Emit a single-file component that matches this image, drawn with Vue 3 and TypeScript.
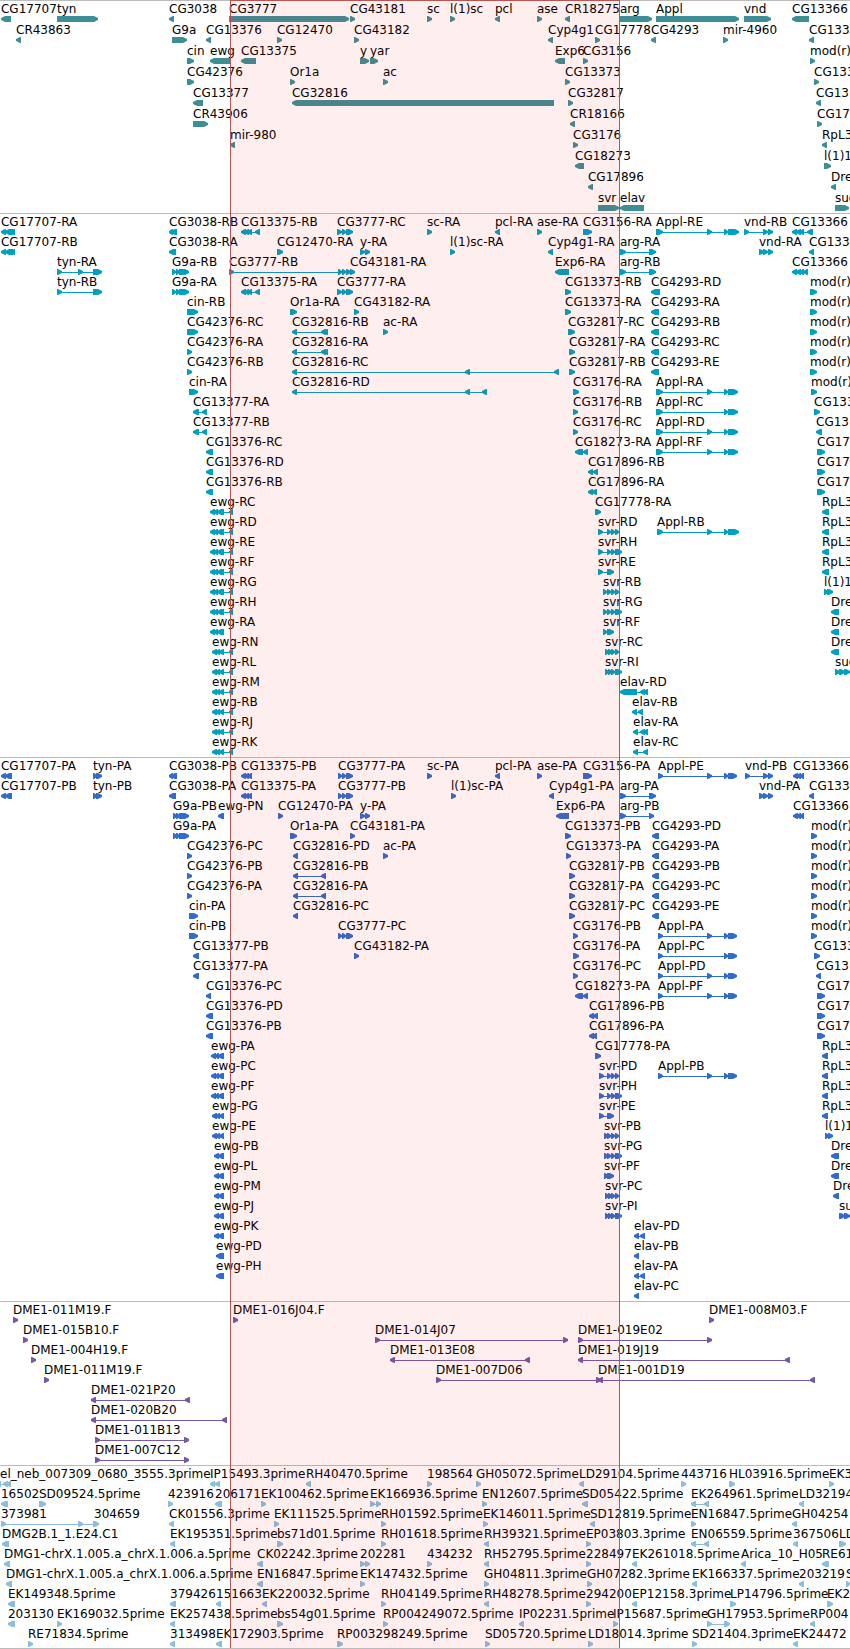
<script setup lang="ts">
interface Feature {
  label: string
  x: number
  width: number
  shapes: string[]
}

interface Track {
  name: string
  kind: string
  rows: Feature[][]
}

const SPAN = 850
const HEAD = 4
const HEIGHT = 6

/* One block of a feature, as a bar that ends in a blunt arrow head. */
function block(start: number, end: number, strand: string): string {
  if (strand === '>') {
    const neck = Math.max(start + 1, end - HEAD)
    return `${start},0 ${neck},0 ${end},2 ${end},4 ${neck},${HEIGHT} ${start},${HEIGHT}`
  }
  const neck = Math.min(end - 1, start + HEAD)
  return `${end},0 ${neck},0 ${start},2 ${start},4 ${neck},${HEIGHT} ${end},${HEIGHT}`
}

/* "label>10-20,30-40" is a forward feature with two blocks, "<" a reverse one. */
function parseFeature(text: string): Feature {
  const [, label, strand, list] = text.match(/^(.*?)([<>])(.*)$/) as RegExpMatchArray
  const blocks = list.split(',').map((b) => b.split('-').map(Number))
  const x = blocks[0][0]
  return {
    label,
    x,
    width: blocks[blocks.length - 1][1] - x,
    shapes: blocks.map(([a, b]) => block(a - x, b - x, strand)),
  }
}

function parseTrack(name: string, kind: string, source: string): Track {
  const rows = source
    .trim()
    .split('\n')
    .map((line) => line.trim().split(/\s+/).map(parseFeature))
  return { name, kind, rows }
}

const genes = `
CG17707<1-11 tyn>57-98 CG3038<169-174 CG3777>229-349 CG43181>350-355 sc>427-432 l(1)sc>450-455 pcl<495-500 ase>537-542 CR18275<565-570 arg>620-652 Appl>656-739 vnd>744-771 CG13366<792-809
CR43863<16-21 G9a>172-187 CG13376<206-211 CG12470>277-282 CG43182>354-359 Cyp4g1<548-553 CG17778>595-600 CG4293<651-656 mir-4960>723-728 CG133<809-814
cin>187-194 ewg<210-230 CG13375<241-256 y>360-369 yar>370-378 Exp6<555-565 CG3156>583-588 mod(r)>810-815
CG42376>187-194 Or1a>290-295 ac>383-388 CG13373>565-570 CG133>814-819
CG13377<193-203 CG32816<292-554 CG32817>568-573 CG13<816-821
CR43906>193-208 CR18166<570-575 CG17>817-822
mir-980<230-235 CG3176>573-578 RpL3<822-827
CG18273<575-584 l(1)1>824-831
CG17896<588-593 Dre<831-836
svr>598-619 elav<620-644 sud>835-849`

const transcripts = `
CG17707-RA<1-6,5-13,11-15 CG3038-RB<169-173,171-177 CG13375-RB<241-246,245-249,248-252,255-260 CG3777-RC>337-342,342-346,346-353 sc-RA>427-432 pcl-RA<495-500 ase-RA>537-542 CG3156-RA>583-592 Appl-RE>656-663,707-712,724-728,728-739 vnd-RB>744-749,763-768,768-773 CG13366<792-797,796-801,800-804,807-813
CG17707-RB<1-6,5-13,11-15 CG3038-RA<169-176 CG12470-RA>277-283 y-RA>360-365,365-370 l(1)sc-RA>450-455 Cyp4g1-RA<548-553 arg-RA>620-626,649-656 vnd-RA>759-764,763-768,768-773 CG133<809-814
tyn-RA>57-62,78-83,93-102 G9a-RB>172-176,176-180,179-189 CG3777-RB>229-234,338-342,342-346,346-351 CG43181-RA>350-355 Exp6-RA<555-569 arg-RB>620-626,649-656 CG13366<792-797,796-801,800-804,803-808
tyn-RB>57-62,93-102 G9a-RA>172-176,176-180,179-189 CG13375-RA<241-246,245-249,248-252,255-260 CG3777-RA>337-342,342-346,346-353 CG13373-RB>565-571 CG4293-RD<651-660 mod(r)>810-817
cin-RB>187-198 Or1a-RA>290-297 CG43182-RA>354-359 CG13373-RA>565-571 CG4293-RA<651-659 mod(r)>810-817
CG42376-RC>187-198 CG32816-RB<292-297,321-326,324-328 ac-RA>383-388 CG32817-RC>568-575 CG4293-RB<651-659 mod(r)>810-817
CG42376-RA>187-192 CG32816-RA<292-297,321-326,324-328 CG32817-RA>569-575 CG4293-RC<651-659 mod(r)>810-817
CG42376-RB>187-192 CG32816-RC<292-297,465-470,554-559 CG32817-RB>569-575 CG4293-RE<651-659 mod(r)>810-817
cin-RA>189-198 CG32816-RD<292-297,465-470,482-487 CG3176-RA>573-579 Appl-RA>656-663,707-712,724-728,728-738 mod(r)>811-817
CG13377-RA<193-199,202-207 CG3176-RB>573-578 Appl-RC>656-663,724-728,728-738 CG133>814-820
CG13377-RB<193-199,202-207 CG3176-RC>573-578 Appl-RD>656-663,707-712,724-728,728-738 CG13<816-822
CG13376-RC<206-213 CG18273-RA<575-583,583-588 Appl-RF>656-663,707-712,724-728,728-738 CG17>817-825
CG13376-RD<206-213 CG17896-RB<588-593,593-598 CG17>817-825
CG13376-RB<206-213 CG17896-RA<588-593,592-597 CG17>817-825
ewg-RC<210-215,214-218,217-224,229-233 CG17778-RA>595-601 RpL3<822-829
ewg-RD<210-215,214-218,217-224,229-233 svr-RD>598-603,607-611,611-615,615-619 Appl-RB>657-663,707-712,724-728,728-739 RpL3<822-829
ewg-RE<210-215,214-218,217-224,229-233 svr-RH>598-603,607-611,611-615,615-622 RpL3<822-829
ewg-RF<210-215,214-218,217-224,229-233 svr-RE>598-603,607-614 RpL3<822-829
ewg-RG<210-215,214-218,217-224,229-233 svr-RB>603-607,607-611,611-615,615-619 l(1)1>824-828,827-833
ewg-RH<210-215,214-218,217-224,229-233 svr-RG>603-607,607-611,611-615,615-622 Dre<831-839
ewg-RA<210-215,214-218,217-224 svr-RF>603-607,607-614 Dre<831-839
ewg-RN<212-217,216-220,219-224,229-233 svr-RC>605-609,608-612,611-615,615-619 Dre<831-839
ewg-RL<212-217,216-220,219-224,229-233 svr-RI>605-609,608-612,611-615,615-622 sud>835-840,839-845,844-850
ewg-RM<212-217,216-220,219-224,229-233 elav-RD<620-637,640-645,643-648
ewg-RB<212-217,216-220,219-224,229-233 elav-RB<632-637,638-643
ewg-RJ<212-217,216-220,219-224,229-233 elav-RA<633-638,640-645,643-648
ewg-RK<212-217,216-220,219-224,229-233 elav-RC<633-638,643-648`

const proteins = `
CG17707-PA<1-6,5-12 tyn-PA>93-97,96-102 CG3038-PB<169-173,171-177 CG13375-PB<241-246,245-249,248-252 CG3777-PA>338-342,342-346,346-353 sc-PA>427-432 pcl-PA<495-500 ase-PA>537-542 CG3156-PA>583-592 Appl-PE>658-663,707-712,724-728,728-737 vnd-PB>745-750,763-768,768-773 CG13366<793-798,797-801,800-804
CG17707-PB<1-6,5-12 tyn-PB>93-97,96-102 CG3038-PA<169-176 CG13375-PA<241-246,245-249,248-252 CG3777-PB>338-342,342-346,346-353 l(1)sc-PA>451-456 Cyp4g1-PA<549-554 arg-PA>620-626,649-656 vnd-PA>759-764,763-768,768-773 CG133<809-814
G9a-PB>173-177,176-180,179-189 ewg-PN<218-224 CG12470-PA>278-283 y-PA>360-365,365-370 Exp6-PA<556-569 arg-PB>620-626,649-654 CG13366<793-798,797-801,800-804
G9a-PA>173-177,176-180,179-189 Or1a-PA>290-297 CG43181-PA>350-355 CG13373-PB>565-571 CG4293-PD<652-659 mod(r)>811-817
CG42376-PC>187-192 CG32816-PD<293-298 ac-PA>383-388 CG13373-PA>566-571 CG4293-PA<652-659 mod(r)>811-817
CG42376-PB>187-192 CG32816-PB<293-298,321-326 CG32817-PB>569-575 CG4293-PB<652-659 mod(r)>811-817
CG42376-PA>187-192 CG32816-PA<293-298,321-326 CG32817-PA>569-575 CG4293-PC<652-659 mod(r)>811-817
cin-PA>189-198 CG32816-PC<293-298 CG32817-PC>569-575 CG4293-PE<652-659 mod(r)>811-817
cin-PB>189-198 CG3777-PC>338-342,342-346,346-353 CG3176-PB>573-578 Appl-PA>658-663,707-712,724-728,728-737 mod(r)>811-817
CG13377-PB<193-199 CG43182-PA>354-359 CG3176-PA>573-579 Appl-PC>658-663,724-728,728-737 CG133>814-820
CG13377-PA<193-199 CG3176-PC>573-578 Appl-PD>658-663,707-712,724-728,728-737 CG13<816-821
CG13376-PC<206-211 CG18273-PA<575-583,583-588 Appl-PF>658-663,707-712,724-728,728-737 CG17>817-825
CG13376-PD<206-213 CG17896-PB<589-594,593-598 CG17>817-825
CG13376-PB<206-213 CG17896-PA<589-594,592-597 CG17>817-825
ewg-PA<211-216,215-219,218-224 CG17778-PA>595-601 RpL3<822-828
ewg-PC<211-216,215-219,218-224 svr-PD>599-604,607-611,611-615,615-619 Appl-PB>658-663,707-712,724-728,728-737 RpL3<822-828
ewg-PF<211-216,215-219,218-224 svr-PH>599-604,607-611,611-615,615-622 RpL3<822-828
ewg-PG<212-217,216-220,219-224 svr-PE>599-604,607-614 RpL3<822-828
ewg-PE<212-217,216-220,219-224 svr-PB>604-608,607-611,611-615,615-619 l(1)1>825-829,828-833
ewg-PB<214-219,218-224 svr-PG>604-608,607-611,611-615,615-622 Dre<831-839
ewg-PL<214-219,218-224 svr-PF>604-608,607-614 Dre<831-839
ewg-PM<214-219,218-224 svr-PC>605-609,608-612,611-615,615-619 Dre<833-839
ewg-PJ<214-219,218-224 svr-PI>605-609,608-612,611-615,615-622 su>839-845,844-850
ewg-PK<214-219,218-224 elav-PD<634-639,640-645
ewg-PD<216-224 elav-PB<634-639
ewg-PH<216-224 elav-PA<634-639,640-645
elav-PC<634-639`

const bacs = `
DME1-011M19.F>13-18 DME1-016J04.F>233-238 DME1-008M03.F>709-714
DME1-015B10.F>23-28 DME1-014J07>375-380,563-568 DME1-019E02>578-583,707-712
DME1-004H19.F>31-36 DME1-013E08<390-395,525-530 DME1-019J19<578-583,785-790
DME1-011M19.F>44-49 DME1-007D06>436-441,596-601 DME1-001D19<598-603,810-815
DME1-021P20<91-96,185-190
DME1-020B20<91-96,222-227
DME1-011B13>95-100,184-189
DME1-007C12>95-100,184-189`

const ests = `
el_neb_007309_0680_3555.3prime<0-1,3-8,6-11 IP15493.3prime<210-215,215-220 RH40470.5prime<306-311 198564>427-432 GH05072.5prime>476-481 LD29104.5prime<579-584 443716>681-686 HL03916.5prime>729-735 EK3>829-834
16502<1-8 SD09524.5prime>39-46 423916>168-173 206171<215-222 EK100462.5prime>261-266 EK166936.5prime>370-375,376-381 EN12607.5prime>482-487 SD05422.5prime<582-588 EK264961.5prime<691-696,704-709 LD32194<799-804
373981>1-6,78-83,93-94 304659>94-99 CK01556.3prime<169-174 EK111525.5prime>274-279 RH01592.5prime>381-386 EK146011.5prime>483-488 SD12819.5prime<590-595 EN16847.5prime>691-696 GH04254<792-797
DMG2B.1_1.E24.C1<2-9 EK195351.5prime<170-175 bs71d01.5prime>277-283 RH01618.5prime>381-386 RH39321.5prime<484-489 EP03803.3prime>586-591 EN06559.5prime<691-696,704-709 367506<793-798 LD>839-846
DMG1-chrX.1.005.a_chrX.1.006.a.5prime<4-10 CK02242.3prime<257-263 202281>360-365,365-370 434232>427-432 RH52795.5prime<484-489 228497>586-591 EK261018.5prime<632-637 Arica_10_H05<741-746 RE61<822-829
DMG1-chrX.1.005.a_chrX.1.006.a.5prime<6-12 EN16847.5prime<257-263 EK147432.5prime>360-365 GH04811.3prime>484-489 GH07282.3prime>587-592 EK166337.5prime<692-697 203219<799-804 S>846-850
EK149348.5prime<8-15 379426<170-176 151663<216-221 EK220032.5prime<262-267 RH04149.5prime>381-386 RH48278.5prime<484-489 294200>586-591 EP12158.3prime<632-637 LP14796.5prime>730-736 EK2>827-833
203130<8-15 EK169032.5prime>57-62 EK257438.5prime<170-175 bs54g01.5prime>277-283 RP004249072.5prime>383-388 IP02231.5prime<519-524 IP15687.5prime>613-618 GH17953.5prime>707-712,724-730 RP004<810-815
RE71834.5prime>28-33 313498<170-175 EK172903.5prime<216-222 RP003298249.5prime>337-343 SD05720.5prime>485-490 LD18014.3prime>588-593 SD21404.3prime>692-697 EK24472<793-798`

const tracks: Track[] = [
  parseTrack('Genes', 'gene', genes),
  parseTrack('Transcripts', 'transcript', transcripts),
  parseTrack('Proteins', 'protein', proteins),
  parseTrack('BAC clones', 'bac', bacs),
  parseTrack('ESTs', 'est', ests),
]

const percent = (x: number): string => `${(x / SPAN) * 100}%`
const selection = { left: percent(230), width: percent(390) }
</script>

<template>
  <main class="browser">
    <section
      v-for="track in tracks"
      :key="track.kind"
      class="track"
      :class="track.kind"
      :aria-label="track.name"
    >
      <div v-for="(row, r) in track.rows" :key="r" class="row">
        <div
          v-for="(feature, f) in row"
          :key="f"
          class="feature"
          :style="{ left: percent(feature.x) }"
        >
          <span class="label">{{ feature.label }}</span>
          <svg class="glyph" :width="feature.width" :height="HEIGHT" aria-hidden="true">
            <rect v-if="feature.shapes.length > 1" x="0" y="3" :width="feature.width" height="1" />
            <polygon v-for="(points, p) in feature.shapes" :key="p" :points="points" />
          </svg>
        </div>
      </div>
    </section>
    <div class="selection" :style="selection"></div>
  </main>
</template>

<style>
body {
  margin: 0;
  background: #fff;
}
</style>

<style scoped>
.browser {
  position: relative;
  overflow: hidden;
  border-bottom: 1px solid #bbb;
  font-family: "DejaVu Sans", sans-serif;
  font-size: 12px;
  color: #000;
}

.track {
  border-top: 1px solid #bbb;
  padding-bottom: 3px;
}

.track:last-of-type {
  padding-bottom: 2px;
}

.row {
  position: relative;
  height: 20px;
}

.gene .row {
  height: 21px;
}

.gene {
  padding-bottom: 2px;
}

.feature {
  position: absolute;
  top: 0;
}

.label {
  display: block;
  height: 15px;
  line-height: 17px;
  white-space: nowrap;
}

.glyph {
  display: block;
}

.gene .glyph {
  fill: #3e8f95;
}

.transcript .glyph {
  fill: #00a0c0;
}

.protein .glyph {
  fill: #306ccc;
}

.bac .glyph {
  fill: #7558a8;
}

.est .glyph {
  fill: #8bbddc;
}

.selection {
  position: absolute;
  top: 0;
  bottom: -1px;
  box-sizing: border-box;
  border: 1px solid #b85454;
  background: rgba(255, 0, 0, 0.067);
}
</style>
